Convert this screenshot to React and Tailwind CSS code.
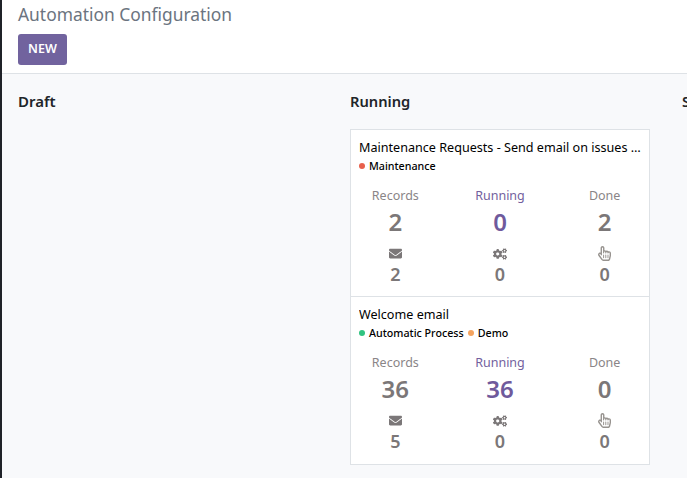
import { FaEnvelope, FaCogs, FaRegHandPointer } from 'react-icons/fa';

const Stat = ({ label, value, purple }) => (
  <div className="flex flex-col items-center">
    <div className={`text-[12.5px] leading-[20px] ${purple ? 'text-[#735f9e]' : 'text-[#8a8587]'}`}>{label}</div>
    <div className={`text-[24px] leading-[32px] font-semibold ${purple ? 'text-[#6f5a9c]' : 'text-[#7b7778]'}`}>{value}</div>
  </div>
);

const Sub = ({ icon, value }) => (
  <div className="flex flex-col items-center">
    <div className="h-[17px] flex items-center text-[#7b7778]">{icon}</div>
    <div className="text-[18px] leading-[24px] font-semibold text-[#7b7778]">{value}</div>
  </div>
);

const Tag = ({ color, name }) => (
  <span className="inline-flex items-center">
    <span className={`w-[6px] h-[6px] rounded-full mr-[4px] ${color}`}></span>
    <span className="text-[10.7px] font-medium text-black">{name}</span>
  </span>
);

const Card = ({ title, tags, records, running, done, mail, border }) => (
  <div className={`h-[167px] px-2 pt-[9px] bg-white ${border ? 'border-b border-[#dee2e6]' : ''}`}>
    <div className="truncate text-[12.6px] leading-[18px] text-black">{title}</div>
    <div className="flex gap-[4px] h-[18px] items-center">
      {tags.map((t) => <Tag key={t.name} color={t.color} name={t.name} />)}
    </div>
    <div className="grid grid-cols-3 mt-[11px] -mx-[16px]">
      <Stat label="Records" value={records} />
      <Stat label="Running" value={running} purple />
      <Stat label="Done" value={done} />
    </div>
    <div className="grid grid-cols-3 mt-[7px] -mx-[16px]">
      <Sub icon={<FaEnvelope className="w-[13px] h-[13px]" />} value={mail} />
      <Sub icon={<FaCogs className="w-[14px] h-[14px]" />} value="0" />
      <Sub icon={<FaRegHandPointer className="w-[13px] h-[15px] text-[#97938f]" />} value="0" />
    </div>
  </div>
);

export default function App() {
  return (
    <div className="flex w-[687px] h-[478px] overflow-hidden bg-[#f8f9fb] font-['Noto_Sans','Open_Sans',sans-serif]">
      <div className="w-[2px] shrink-0 bg-[#1f2228]"></div>
      <div className="flex-1 min-w-0 flex flex-col">
        <div className="h-[74px] shrink-0 bg-white border-b border-[#dee2e6] pl-[16px]">
          <div className="text-[17.4px] leading-[24px] pt-[2px] h-[34px] text-[#6b7480]">Automation Configuration</div>
          <button className="h-[31px] w-[49px] rounded-[3px] bg-[#71639e] text-white text-[12.5px] font-semibold">NEW</button>
        </div>
        <div className="flex pl-[16px]">
          <div className="w-[332px] shrink-0 pt-[17px]">
            <div className="text-[15px] leading-[20px] font-semibold text-[#212529]">Draft</div>
          </div>
          <div className="w-[332px] shrink-0 pt-[17px]">
            <div className="text-[14.7px] leading-[20px] font-semibold text-[#212529]">Running</div>
            <div className="w-[300px] mt-[18px] border border-[#dee2e6]">
              <Card
                title="Maintenance Requests - Send email on issues assigned to team"
                tags={[{ color: 'bg-[#e8604c]', name: 'Maintenance' }]}
                records="2"
                running="0"
                done="2"
                mail="2"
                border
              />
              <Card
                title="Welcome email"
                tags={[
                  { color: 'bg-[#30c381]', name: 'Automatic Process' },
                  { color: 'bg-[#f4a460]', name: 'Demo' },
                ]}
                records="36"
                running="36"
                done="0"
                mail="5"
              />
            </div>
          </div>
          <div className="w-[332px] shrink-0 pt-[17px]">
            <div className="text-[14.7px] leading-[20px] font-semibold text-[#212529]">Stopped</div>
          </div>
        </div>
      </div>
    </div>
  );
}
